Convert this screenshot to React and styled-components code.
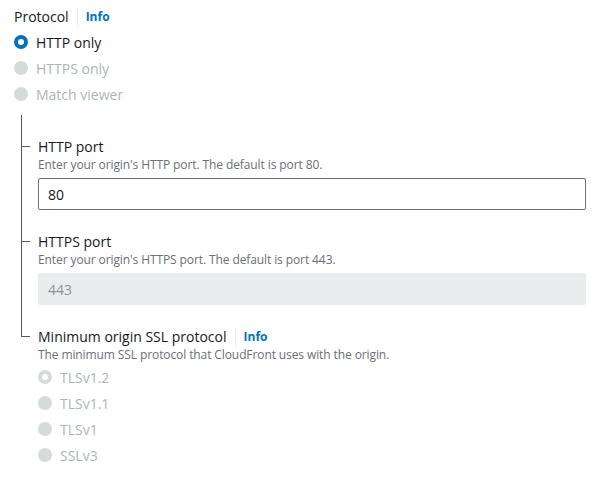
import styled, { createGlobalStyle } from "styled-components";

const GlobalStyle = createGlobalStyle`
  body {
    margin: 0;
    background: #ffffff;
    font-family: "Open Sans", "Noto Sans", Arial, sans-serif;
    color: #16191f;
  }
`;

const Page = styled.div`
  padding: 7px 12px 20px 14px;
  width: 597px;
  box-sizing: border-box;
`;

const Header = styled.div`
  display: flex;
  align-items: center;
  height: 20px;
  font-size: 14px;
  line-height: 20px;
`;

const Divider = styled.span`
  width: 1px;
  height: 20px;
  background: #eaeded;
  margin: 0 8px;
`;

const InfoLink = styled.span`
  color: #0073bb;
  font-weight: 700;
  font-size: 12px;
`;

const RadioList = styled.div`
  display: flex;
  flex-direction: column;
  margin-top: ${(p) => p.top || 0}px;
`;

const RadioRow = styled.div`
  display: flex;
  align-items: center;
  height: 26px;
  gap: 8px;
  font-size: 14px;
  color: ${(p) => (p.disabled ? "#aab7b8" : "#16191f")};
`;

const Dot = styled.span`
  box-sizing: border-box;
  width: 14px;
  height: 14px;
  border-radius: 50%;
  background: ${(p) => (p.checked ? "#ffffff" : "#d5dbdb")};
  border: ${(p) =>
    p.checked ? `4px solid ${p.disabled ? "#d5dbdb" : "#0073bb"}` : "none"};
`;

const Tree = styled.div`
  margin: 8px 0 0 7px;
  display: flex;
  flex-direction: column;
`;

const Item = styled.div`
  position: relative;
  padding: 22px 0 0 17px;

  &::before {
    content: "";
    position: absolute;
    left: 0;
    top: 0;
    width: 1px;
    background: #545b64;
    height: ${(p) => (p.last ? "31px" : "100%")};
  }

  &::after {
    content: "";
    position: absolute;
    left: 0;
    top: 31px;
    width: 9px;
    height: 1px;
    background: #545b64;
  }
`;

const Label = styled.div`
  display: flex;
  align-items: center;
  font-size: 14px;
  line-height: 20px;
  height: 20px;
`;

const Desc = styled.div`
  font-size: 12px;
  line-height: 16px;
  letter-spacing: -0.1px;
  color: #687078;
`;

const Input = styled.div`
  box-sizing: border-box;
  margin-top: 5px;
  height: 32px;
  width: 548px;
  border: 1px solid ${(p) => (p.disabled ? "#eaeded" : "#687078")};
  background: ${(p) => (p.disabled ? "#eaeded" : "#ffffff")};
  color: ${(p) => (p.disabled ? "#879596" : "#16191f")};
  border-radius: 2px;
  padding: 0 9px;
  display: flex;
  align-items: center;
  font-size: 14px;
`;

const Radio = ({ label, checked, disabled }) => (
  <RadioRow disabled={disabled}>
    <Dot checked={checked} disabled={disabled} />
    <span>{label}</span>
  </RadioRow>
);

export default function App() {
  return (
    <Page>
      <GlobalStyle />
      <Header>
        Protocol
        <Divider />
        <InfoLink>Info</InfoLink>
      </Header>
      <RadioList top={2}>
        <Radio label="HTTP only" checked />
        <Radio label="HTTPS only" disabled />
        <Radio label="Match viewer" disabled />
      </RadioList>

      <Tree>
        <Item>
          <Label>HTTP port</Label>
          <Desc>Enter your origin's HTTP port. The default is port 80.</Desc>
          <Input>80</Input>
        </Item>
        <Item>
          <Label>HTTPS port</Label>
          <Desc>Enter your origin's HTTPS port. The default is port 443.</Desc>
          <Input disabled>443</Input>
        </Item>
        <Item last>
          <Label>
            Minimum origin SSL protocol
            <Divider />
            <InfoLink>Info</InfoLink>
          </Label>
          <Desc>The minimum SSL protocol that CloudFront uses with the origin.</Desc>
          <RadioList top={1}>
            <Radio label="TLSv1.2" checked disabled />
            <Radio label="TLSv1.1" disabled />
            <Radio label="TLSv1" disabled />
            <Radio label="SSLv3" disabled />
          </RadioList>
        </Item>
      </Tree>
    </Page>
  );
}
